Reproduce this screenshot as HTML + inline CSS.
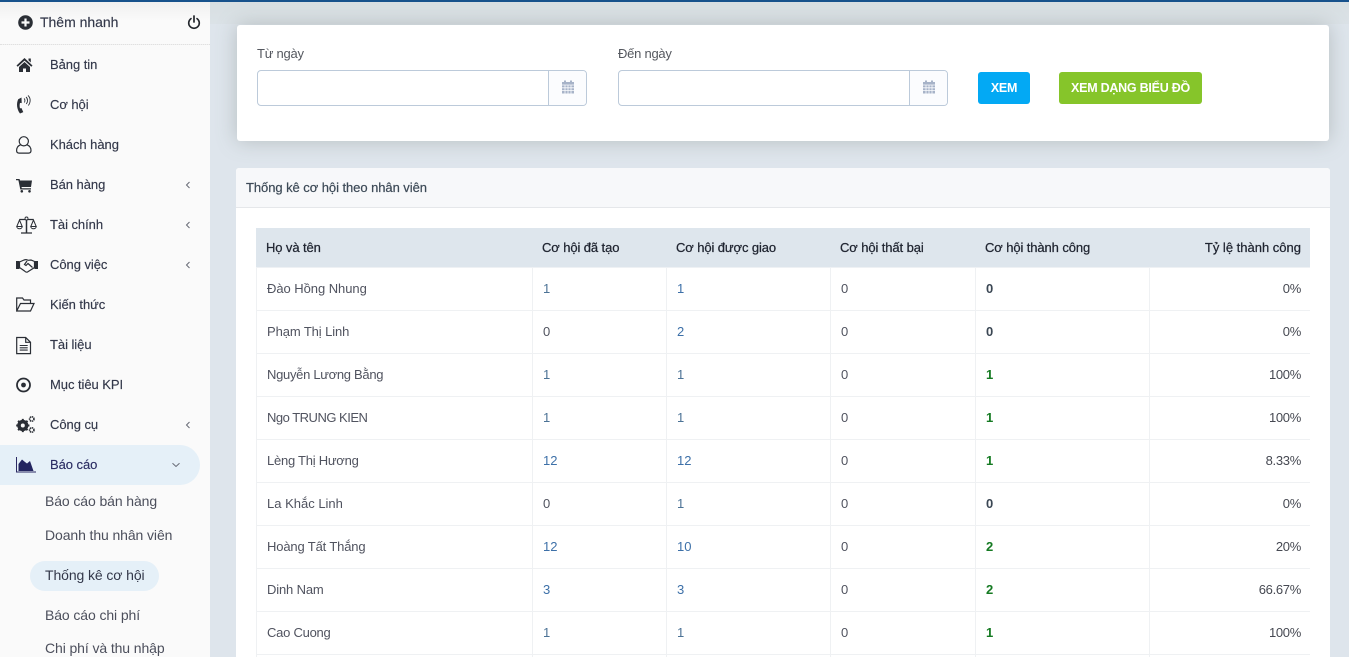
<!DOCTYPE html>
<html lang="vi"><head><meta charset="utf-8"><title>Thống kê cơ hội</title>
<style>
*{box-sizing:border-box}
html,body{margin:0;padding:0;width:1349px;height:657px;overflow:hidden;background:#dee5ec;font-family:"Liberation Sans",sans-serif;font-size:13px;color:#3f4254}
body{position:relative}
.a{position:absolute;white-space:nowrap}
#top{position:absolute;left:0;top:0;width:1349px;height:2px;background:#17528c;z-index:5}
#sh{position:absolute;left:210px;top:2px;width:1139px;height:22px;background:linear-gradient(#d8dfe2,#dbe2e7)}
#side{position:absolute;left:0;top:0;width:210px;height:657px;background:#fafafa;overflow:hidden}
#qa{position:absolute;left:0;top:2px;width:210px;height:43px;background:linear-gradient(#f0f0f0,#fafafa 45%);border-bottom:1px dotted #e0e0e0}
.m{position:absolute;left:50px;font-size:13px;line-height:16px;color:#33384a;font-weight:500;letter-spacing:-.05px;white-space:nowrap;-webkit-text-stroke:.15px #33384a}
.s{position:absolute;left:45px;font-size:14px;line-height:16px;color:#4c4f5c;white-space:nowrap;letter-spacing:-.1px}
.i{position:absolute;left:16px;width:20px;height:20px}
.c{position:absolute;left:185px;width:6px;height:10px}
.card{position:absolute;background:#fff;border-radius:3px}
.l{position:absolute;font-size:13px;line-height:16px;color:#55585f;white-space:nowrap;letter-spacing:-.25px}
.ig{position:absolute;top:70px;height:36px;border:1px solid #bccada;border-radius:4px;background:#fff}
.ig b{position:absolute;right:0;top:0;width:38px;height:34px;background:#fbfcfe;border-left:1px solid #bccada;border-radius:0 3px 3px 0}
.ig svg{position:absolute;left:11.500px;top:9px}
.btn{position:absolute;top:72px;height:32px;border-radius:3px;color:#fff;font-weight:bold;font-size:12.500px;line-height:32px;text-align:center;letter-spacing:-.25px;white-space:nowrap}
#tw{position:absolute;left:256px;top:228px;width:1054px;height:429px;overflow:hidden}
table{width:1054px;border-collapse:separate;border-spacing:0;table-layout:fixed;font-size:13px}
th{height:40px;background:#dee6ed;background-clip:padding-box;border-bottom:1px solid #eef1f4;color:#1f2430;font-weight:500;text-align:left;padding:0 0 0 9px;-webkit-text-stroke:.25px #1f2430;letter-spacing:-.1px;white-space:nowrap}
th:first-child{padding-left:10px}
td{height:43px;border-right:1px solid #eff1f3;border-bottom:1px solid #eff1f3;padding:0 0 2px 10px;color:#50535f;white-space:nowrap}
td:first-child{border-left:1px solid #eff1f3}
td:last-child{text-align:right;padding:0 9px 2px 0;border-right:0;letter-spacing:-.3px;color:#464952}
th:last-child{text-align:right;padding:0 9px 0 0;letter-spacing:0}
td.b{color:#3d70a8}
td.q{color:#4c7396}
td.g{color:#157a22;font-weight:bold}
td.z{color:#3b4754;font-weight:bold}
</style></head><body>
<div id="top"></div>
<div id="sh"></div>

<div class="card" style="left:237px;top:25px;width:1092px;height:116px;box-shadow:0 0 20px rgba(110,120,115,.36)"></div>
<div class="l" style="left:257px;top:46px">Từ ngày</div>
<div class="ig" style="left:257px;width:330px"><b><svg width="14" height="14" viewBox="0 0 14 14"><path fill="#a7b3c8" d="M1 2h2V.5h2V2h4V.5h2V2h2v11.500H1z"/><path stroke="#fbfcfe" stroke-width=".8" fill="none" d="M1 5h12M1 7.800h12M1 10.600h12M4 5v9M7 5v9M10 5v9"/></svg></b></div>
<div class="l" style="left:618px;top:46px">Đến ngày</div>
<div class="ig" style="left:618px;width:330px"><b><svg width="14" height="14" viewBox="0 0 14 14"><path fill="#a7b3c8" d="M1 2h2V.5h2V2h4V.5h2V2h2v11.500H1z"/><path stroke="#fbfcfe" stroke-width=".8" fill="none" d="M1 5h12M1 7.800h12M1 10.600h12M4 5v9M7 5v9M10 5v9"/></svg></b></div>
<div class="btn" style="left:978px;width:52px;background:#03a9f4">XEM</div>
<div class="btn" style="left:1059px;width:143px;background:#86c52a">XEM DẠNG BIỂU ĐỒ</div>

<div class="card" style="left:236px;top:168px;width:1094px;height:489px;border-radius:3px 3px 0 0"></div>
<div class="a" style="left:236px;top:168px;width:1094px;height:40px;background:#f7f8fa;border-bottom:1px solid #e5e7ea;border-radius:3px 3px 0 0"></div>
<div class="a" style="left:246px;top:179px;line-height:17px;color:#3d4a57;-webkit-text-stroke:.2px #3d4a57;letter-spacing:-.06px">Thống kê cơ hội theo nhân viên</div>

<div id="tw"><table>
<colgroup><col style="width:277px"><col style="width:134px"><col style="width:164px"><col style="width:145px"><col style="width:174px"><col style="width:160px"></colgroup>
<tr><th>Họ và tên</th><th>Cơ hội đã tạo</th><th>Cơ hội được giao</th><th>Cơ hội thất bại</th><th>Cơ hội thành công</th><th>Tỷ lệ thành công</th></tr>
<tr><td style="letter-spacing:-.05px">Đào Hồng Nhung</td><td class="q">1</td><td class="b">1</td><td>0</td><td class="z">0</td><td>0%</td></tr>
<tr><td style="letter-spacing:-.1px">Phạm Thị Linh</td><td>0</td><td class="b">2</td><td>0</td><td class="z">0</td><td>0%</td></tr>
<tr><td style="letter-spacing:-.3px">Nguyễn Lương Bằng</td><td class="q">1</td><td class="q">1</td><td>0</td><td class="g">1</td><td>100%</td></tr>
<tr><td style="letter-spacing:-.5px">Ngo TRUNG KIEN</td><td class="q">1</td><td class="q">1</td><td>0</td><td class="g">1</td><td>100%</td></tr>
<tr><td style="letter-spacing:-.25px">Lèng Thị Hương</td><td class="b">12</td><td class="b">12</td><td>0</td><td class="g">1</td><td>8.33%</td></tr>
<tr><td>La Khắc Linh</td><td>0</td><td class="q">1</td><td>0</td><td class="z">0</td><td>0%</td></tr>
<tr><td style="letter-spacing:-.15px">Hoàng Tất Thắng</td><td class="b">12</td><td class="b">10</td><td>0</td><td class="g">2</td><td>20%</td></tr>
<tr><td style="letter-spacing:-.15px">Dinh Nam</td><td class="b">3</td><td class="b">3</td><td>0</td><td class="g">2</td><td>66.67%</td></tr>
<tr><td style="letter-spacing:-.25px">Cao Cuong</td><td class="q">1</td><td class="q">1</td><td>0</td><td class="g">1</td><td>100%</td></tr>
</table>
<div style="position:absolute;left:0;top:427px;width:1054px;height:2px">
<i style="position:absolute;left:0;top:0;width:1px;height:2px;background:#eff1f3"></i>
<i style="position:absolute;left:276px;top:0;width:1px;height:2px;background:#eff1f3"></i>
<i style="position:absolute;left:410px;top:0;width:1px;height:2px;background:#eff1f3"></i>
<i style="position:absolute;left:574px;top:0;width:1px;height:2px;background:#eff1f3"></i>
<i style="position:absolute;left:719px;top:0;width:1px;height:2px;background:#eff1f3"></i>
<i style="position:absolute;left:893px;top:0;width:1px;height:2px;background:#eff1f3"></i>
</div>
</div>

<div id="side">
<div id="qa"></div>
<svg class="a" style="left:18px;top:15px" width="15" height="15" viewBox="0 0 15 15"><circle cx="7.500" cy="7.500" r="7.300" fill="#2a2e35"/><path d="M7.500 3.500v8M3.500 7.500h8" stroke="#fafafa" stroke-width="2.200"/></svg>
<div class="a" style="left:40px;top:14px;font-size:14px;line-height:17px;color:#33384a;-webkit-text-stroke:.15px #33384a;letter-spacing:-.02px">Thêm nhanh</div>
<svg class="a" style="left:187px;top:15px" width="14" height="15" viewBox="0 0 14 15"><path d="M4 3.600a5.300 5.300 0 1 0 6 0" fill="none" stroke="#22262c" stroke-width="1.600" stroke-linecap="round"/><path d="M7 1v6" stroke="#22262c" stroke-width="1.700" stroke-linecap="round"/></svg>

<svg class="i" style="top:55px" viewBox="0 0 20 20"><path fill="#2a2e35" d="M.5 10.500 8.500 3l8 7.500-1.200 1.300-6.800-6.200-6.800 6.200zM12.500 3.500h2.300v4l-2.300-2.100zM3 12 8.500 7l5.500 5v5h-4v-3.500H7V17H3z"/></svg>
<svg class="i" style="top:95px" viewBox="0 0 20 20"><path fill="#2a2e35" d="M5.500 2.500 2.200 4.200C.2 8.500.7 14 4 18.500l3.300-1.400-1.900-4.100-1.400.4c-.5-2-.5-3.600 0-5.500l1.700.2z"/><path fill="none" stroke="#2a2e35" stroke-width=".9" d="M8 3.500c1.200.8 1.200 3 .3 4M10 2c2 1.700 2 5 .3 7M12 .5c2.800 2.500 2.800 7 .3 10"/></svg>
<svg class="i" style="top:135px" viewBox="0 0 20 20"><circle cx="7.800" cy="6.300" r="4.600" fill="none" stroke="#2a2e35" stroke-width="1.200"/><path d="M4.500 9.800C2 10.800.6 12.500.6 15.500c0 1.600 1 2.600 2.500 2.600h9.400c1.500 0 2.500-1 2.500-2.600 0-3-1.400-4.700-3.900-5.700" fill="none" stroke="#2a2e35" stroke-width="1.200"/></svg>
<svg class="i" style="top:175px" viewBox="0 0 20 20"><path fill="#2a2e35" d="M0 4h3.500l.6 1.500H16l-1 6.500H5.500l.3 1.300H15v1.200H4.300L2.400 5.200H0z"/><circle cx="5.800" cy="16.300" r="1.300" fill="#2a2e35"/><circle cx="13.500" cy="16.300" r="1.300" fill="#2a2e35"/></svg>
<svg class="i" style="top:215px;width:22px" viewBox="0 0 22 20"><path d="M10.500 2v15.500" stroke="#2a2e35" stroke-width="1.500" fill="none"/><path d="M5 18h11M3.500 4.500h14" stroke="#2a2e35" stroke-width="1.200" fill="none"/><circle cx="10.500" cy="3.500" r="1.500" fill="#fafafa" stroke="#2a2e35" stroke-width=".9"/><path d="M3.500 5 .8 11.500h5.400zM17.500 5l-2.700 6.500h5.400zM.8 11.500a2.700 2.300 0 0 0 5.400 0M14.800 11.500a2.700 2.300 0 0 0 5.400 0" fill="none" stroke="#2a2e35" stroke-width="1"/></svg>
<svg class="i" style="top:255px;width:23px" viewBox="0 0 23 20"><path fill="#2a2e35" d="M0 6h3.500v8H0zM18.500 6H22v8h-3.500z"/><path fill="none" stroke="#2a2e35" stroke-width="1.200" d="M3.500 7 8 5c1.500-.5 3-.5 4 .3L15 5l3.500 1.500v6L11.500 17c-1 .5-2 0-3-1l-5-3.500zM11 6 8.500 9.500l1.500 1 2-2 4.500 4"/></svg>
<svg class="i" style="top:295px" viewBox="0 0 20 20"><path fill="none" stroke="#2a2e35" stroke-width="1.200" d="M.7 16V3h5.800l1.500 2h6.500V8.500M.7 16h13.800L18 8.500H4.500z"/></svg>
<svg class="i" style="top:335px" viewBox="0 0 20 20"><path fill="none" stroke="#2a2e35" stroke-width="1.200" d="M.7 2.500h9l4.800 4.800v11.300H.7zM9.700 2.500v4.800h4.800"/><path stroke="#2a2e35" stroke-width="1.100" d="M3.700 10.500h8M3.700 12.800h8M3.700 15.100h8"/></svg>
<svg class="i" style="top:375px" viewBox="0 0 20 20"><circle cx="7.500" cy="10" r="6.500" fill="none" stroke="#2a2e35" stroke-width="1.800"/><circle cx="7.500" cy="10" r="2.400" fill="#2a2e35"/></svg>
<svg class="i" style="top:415px" viewBox="0 0 20 20"><circle cx="6.800" cy="10.500" r="4" fill="none" stroke="#2a2e35" stroke-width="3.200"/><path stroke="#2a2e35" stroke-width="2" d="M6.800 3.900v13.200M.2 10.500h13.200M2.100 5.800l9.400 9.400M11.500 5.800l-9.400 9.400"/><circle cx="6.800" cy="10.500" r="2" fill="#fafafa"/><circle cx="15.800" cy="4" r="2.200" fill="none" stroke="#2a2e35" stroke-width="1.600" stroke-dasharray="1.400 .6"/><circle cx="15.800" cy="15" r="2.200" fill="none" stroke="#2a2e35" stroke-width="1.600" stroke-dasharray="1.400 .6"/></svg>

<div class="m" style="top:57px">Bảng tin</div>
<div class="m" style="top:97px">Cơ hội</div>
<div class="m" style="top:137px">Khách hàng</div>
<div class="m" style="top:177px">Bán hàng</div>
<div class="m" style="top:217px">Tài chính</div>
<div class="m" style="top:257px">Công việc</div>
<div class="m" style="top:297px">Kiến thức</div>
<div class="m" style="top:337px">Tài liệu</div>
<div class="m" style="top:377px">Mục tiêu KPI</div>
<div class="m" style="top:417px">Công cụ</div>

<svg class="c" style="top:180px" viewBox="0 0 6 10"><path d="M4.500 2 1.500 5l3 3" fill="none" stroke="#666a75" stroke-width="1"/></svg>
<svg class="c" style="top:220px" viewBox="0 0 6 10"><path d="M4.500 2 1.500 5l3 3" fill="none" stroke="#666a75" stroke-width="1"/></svg>
<svg class="c" style="top:260px" viewBox="0 0 6 10"><path d="M4.500 2 1.500 5l3 3" fill="none" stroke="#666a75" stroke-width="1"/></svg>
<svg class="c" style="top:420px" viewBox="0 0 6 10"><path d="M4.500 2 1.500 5l3 3" fill="none" stroke="#666a75" stroke-width="1"/></svg>

<div class="a" style="left:0;top:445px;width:200px;height:40px;background:#e5f0f8;border-radius:0 20px 20px 0"></div>
<svg class="i" style="top:457px;width:20px;height:16px" viewBox="0 0 20 16"><path d="M.5 0v15h19.500" fill="none" stroke="#2b2a63" stroke-width="1"/><path fill="#232560" d="M2.500 14V7L6 2.500 9 5l2 1.500L14 4l3.500 10z"/></svg>
<div class="m" style="top:457px;color:#2b2d63;-webkit-text-stroke:.15px #2b2d63">Báo cáo</div>
<svg class="a" style="left:171px;top:462px" width="10" height="6" viewBox="0 0 10 6"><path d="M1.500 1.200 5 4.500l3.500-3.300" fill="none" stroke="#666a75" stroke-width="1"/></svg>

<div class="s" style="top:493px">Báo cáo bán hàng</div>
<div class="s" style="top:527px">Doanh thu nhân viên</div>
<div class="a" style="left:30px;top:561px;width:129px;height:30px;background:#e5f0f8;border-radius:15px"></div>
<div class="s" style="top:567px;color:#33384a">Thống kê cơ hội</div>
<div class="s" style="top:607px">Báo cáo chi phí</div>
<div class="s" style="top:640px">Chi phí và thu nhập</div>
</div>
</body></html>
